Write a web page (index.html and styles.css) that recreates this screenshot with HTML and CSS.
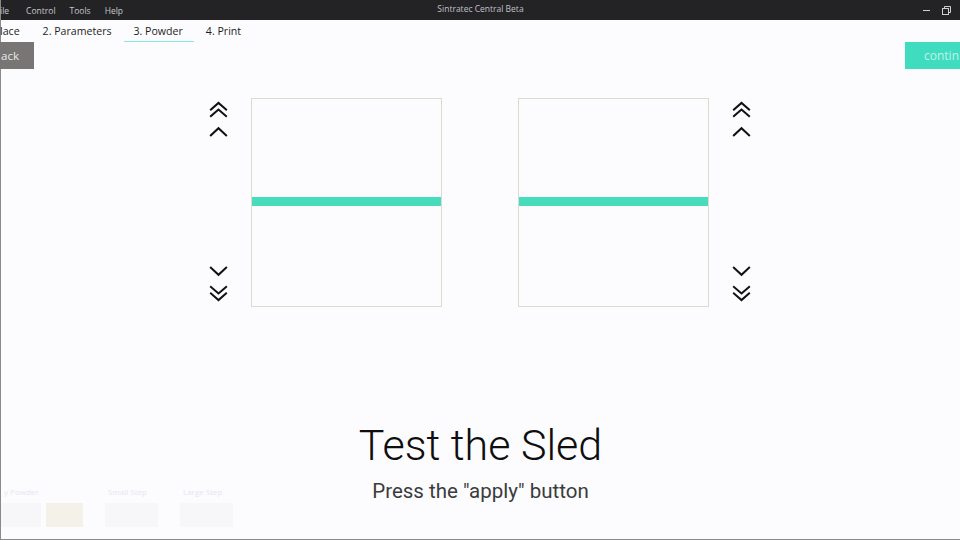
FILE: index.html
```html
<!DOCTYPE html>
<html>
<head>
<meta charset="utf-8">
<link rel="stylesheet" href="styles.css">
</head>
<body>
<div class="window">
  <div class="titlebar">
    <div class="menu">
      <span class="menu-item first">ile</span>
      <span class="menu-item">Control</span>
      <span class="menu-item">Tools</span>
      <span class="menu-item">Help</span>
    </div>
    <div class="app-title">Sintratec Central Beta</div>
    <div class="win-controls">
      <span class="win-min"></span>
      <svg class="win-restore" width="9" height="9" viewBox="0 0 9 9"><rect x="0.5" y="2.5" width="6" height="6" fill="none" stroke="#cfcfcf" stroke-width="1"/><path d="M2.5 2.5 V0.5 H8.5 V6.5 H6.5" fill="none" stroke="#cfcfcf" stroke-width="1"/></svg>
    </div>
  </div>
  <div class="tabs">
    <span class="tab first">lace</span>
    <span class="tab">2. Parameters</span>
    <span class="tab active">3. Powder</span>
    <span class="tab">4. Print</span>
  </div>
  <div class="actions">
    <div class="btn btn-back">ack</div>
    <div class="btn btn-continue">contin</div>
  </div>
  <div class="stage">
    <div class="arrows">
      <div class="arrow-group">
        <svg class="chev dbl" viewBox="0 0 20 18"><path d="M2 9 L10 2 L18 9 M2 16 L10 9 L18 16"/></svg>
        <svg class="chev sgl" viewBox="0 0 20 11"><path d="M2 9.5 L10 2 L18 9.5"/></svg>
      </div>
      <div class="arrow-group">
        <svg class="chev sgl" viewBox="0 0 20 11"><path d="M2 1.5 L10 9 L18 1.5"/></svg>
        <svg class="chev dbl" viewBox="0 0 20 18"><path d="M2 2 L10 9 L18 2 M2 9 L10 16 L18 9"/></svg>
      </div>
    </div>
    <div class="tank"><div class="sled"></div></div>
    <div class="tank"><div class="sled"></div></div>
    <div class="arrows">
      <div class="arrow-group">
        <svg class="chev dbl" viewBox="0 0 20 18"><path d="M2 9 L10 2 L18 9 M2 16 L10 9 L18 16"/></svg>
        <svg class="chev sgl" viewBox="0 0 20 11"><path d="M2 9.5 L10 2 L18 9.5"/></svg>
      </div>
      <div class="arrow-group">
        <svg class="chev sgl" viewBox="0 0 20 11"><path d="M2 1.5 L10 9 L18 1.5"/></svg>
        <svg class="chev dbl" viewBox="0 0 20 18"><path d="M2 2 L10 9 L18 2 M2 9 L10 16 L18 9"/></svg>
      </div>
    </div>
  </div>
  <div class="message">
    <h1 class="headline">Test the Sled</h1>
    <p class="subline">Press the "apply" button</p>
  </div>
  <div class="footer">
    <div class="field">
      <span class="field-label">y Powder</span>
      <div class="field-boxes"><span class="fbox w40"></span><span class="fbox w37 strong"></span></div>
    </div>
    <div class="field">
      <span class="field-label">Small Step</span>
      <div class="field-boxes"><span class="fbox w53"></span></div>
    </div>
    <div class="field">
      <span class="field-label">Large Step</span>
      <div class="field-boxes"><span class="fbox w53"></span></div>
    </div>
  </div>
</div>
</body>
</html>
```

FILE: styles.css
```css
* { box-sizing: border-box; }
html, body { margin: 0; padding: 0; }
body {
  width: 960px;
  height: 540px;
  overflow: hidden;
  background: #fcfcfe;
  font-family: "Open Sans", "Noto Sans", sans-serif;
}
.window {
  width: 960px;
  height: 540px;
  display: flex;
  flex-direction: column;
  border-left: 1px solid #8a8a8a;
  border-bottom: 1px solid #8a8a8a;
  position: relative;
}
.titlebar {
  height: 20px;
  background: #232326;
  color: #c8c8cc;
  font-size: 8.5px;
  display: flex;
  align-items: center;
  position: relative;
}
.menu { display: flex; align-items: center; }
.menu-item { margin-right: 14px; }
.menu-item.first { margin-left: -1px; margin-right: 17px; }
.app-title {
  position: absolute;
  left: 0; right: 0;
  text-align: center;
  top: 3px;
  font-size: 8.5px;
  color: #c0c0c6;
}
.win-controls {
  margin-left: auto;
  display: flex;
  align-items: center;
  gap: 12px;
  padding-right: 9px;
}
.win-min { width: 7px; height: 1px; background: #d0d0d0; }
.win-restore { display: block; }

.tabs {
  height: 22px;
  display: flex;
  align-items: center;
  font-size: 10.6px;
  color: #1c1c1c;
}
.tab { padding: 0 10px; height: 22px; line-height: 22px; margin-right: 2px; }
.tab.first { padding-left: 0; margin-left: -1px; margin-right: 3px; }
.tab.active { border-bottom: 1px solid #7eeee4; padding-right: 11px; }

.actions {
  height: 27px;
  display: flex;
  justify-content: space-between;
}
.btn {
  height: 27px;
  line-height: 27px;
  font-size: 11.5px;
  color: #e8e8e8;
  overflow: hidden;
  white-space: nowrap;
}
.btn-back { width: 34px; background: #777674; margin-left: -1px; padding-left: 1px; }
.btn-continue { width: 55px; background: #40dcc0; color: #bff5ea; padding-left: 19px; font-size: 12px; }

.stage {
  margin-top: 29px;
  margin-left: -2px;
  display: flex;
  justify-content: center;
  gap: 23px;
}
.stage .tank + .tank { margin-left: 53px; }
.arrows {
  width: 19px;
  height: 208px;
  display: flex;
  flex-direction: column;
  justify-content: space-between;
  padding: 3px 0 4px;
}
.arrow-group { display: flex; flex-direction: column; align-items: center; gap: 8px; }
.chev { display: block; width: 19px; fill: none; stroke: #111; stroke-width: 2.1; stroke-linecap: square; }
.chev.dbl { height: 17px; }
.chev.sgl { height: 11px; }

.tank {
  width: 191px;
  height: 209px;
  border: 1px solid #dedbcc;
  display: flex;
  flex-direction: column;
  justify-content: center;
}
.sled { height: 9px; background: #46dcbc; margin-top: -2px; }

.message {
  margin-top: 113px;
  text-align: center;
}
.headline {
  margin: 0;
  font-family: "Roboto", sans-serif;
  font-weight: 300;
  font-size: 43px;
  line-height: 50px;
  color: #0e0e0e;
}
.subline {
  margin: 9px 0 0;
  font-family: "Roboto", sans-serif;
  font-weight: 400;
  font-size: 20.5px;
  line-height: 24px;
  color: #3b3b3b;
}

.footer {
  position: absolute;
  left: 0;
  bottom: 12px;
  display: flex;
  gap: 22px;
}
.field { display: flex; flex-direction: column; gap: 6px; }
.field-label { font-size: 8px; color: #e8e5f0; padding-left: 3px; height: 11px; line-height: 11px; }
.field-boxes { display: flex; gap: 5px; }
.fbox { height: 24px; background: #f7f6f9; }
.fbox.strong { background: #f4f2e8; }
.w40 { width: 40px; }
.w37 { width: 37px; }
.w53 { width: 53px; }
```
